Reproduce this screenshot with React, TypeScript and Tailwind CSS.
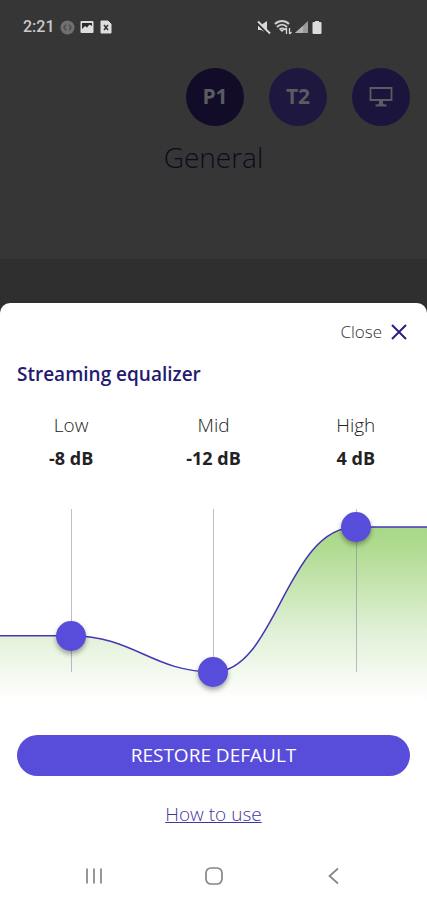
import { useState } from "react";

const MIN_DB = -12;
const MAX_DB = 6;
const CHART_HEIGHT = 224;
const THUMB_RADIUS = 15;
const TRACK_HEIGHT = 163;
const COLUMNS = [71, 213, 356];

const BANDS = ["Low", "Mid", "High"];

function levelToY(level: number) {
  return THUMB_RADIUS + ((MAX_DB - level) / (MAX_DB - MIN_DB)) * TRACK_HEIGHT;
}

function StatusBar() {
  return (
    <div className="flex h-6 items-center justify-between pl-[23px] pr-[104px] text-[#cacaca]">
      <div className="flex items-center gap-[5px]">
        <span className="font-['Roboto',sans-serif] text-base font-medium leading-6">2:21</span>
        <svg width="15" height="15" viewBox="0 0 15 15" aria-hidden="true">
          <circle cx="7.5" cy="7.5" r="7" fill="#707070" />
          <path d="M6 4.500 4 7.500l2 3M9 4.500l2 3-2 3" fill="none" stroke="#505050" strokeWidth="1.600" />
        </svg>
        <svg width="14" height="14" viewBox="0 0 14 14" aria-hidden="true">
          <rect x="0.5" y="1" width="13" height="12" rx="1" fill="#dedede" />
          <path d="M2 3h10v3L9.500 4.500 7 7.500 5 6 2 9z" fill="#2b2b2b" />
        </svg>
        <svg width="14" height="14" viewBox="0 0 14 14" aria-hidden="true">
          <path d="M2 1h7l3 3v9H2z" fill="#dedede" stroke="#dedede" strokeLinejoin="round" />
          <path d="m5 5 4 5M9 5l-4 5" stroke="#333" strokeWidth="1.500" />
        </svg>
      </div>
      <div className="flex items-center gap-[3px]">
        <svg width="15" height="15" viewBox="0 0 15 15" aria-hidden="true">
          <path d="M2 5h3l6-4v12L5 10H2z" fill="#d8d8d8" />
          <path d="m1 3 11 11" stroke="#2b2b2b" strokeWidth="2" />
          <path d="m2 1.500 12 12" stroke="#d8d8d8" strokeWidth="2" />
        </svg>
        <svg width="18" height="15" viewBox="0 0 18 15" aria-hidden="true">
          <path d="M1 4c4-4 10-4 14 0M3 7c3-3 7-3 10 0M5.500 9.500c2-1.500 3.500-1.500 5 0" fill="none" stroke="#d0d0d0" strokeWidth="2" />
          <path d="M6 10h4l-2 2z" fill="#d8d8d8" />
          <path d="M12.500 14V8m-2 2 2-2M15.500 8v6m2-2-2 2" fill="none" stroke="#d8d8d8" strokeWidth="1.300" />
        </svg>
        <svg width="13" height="14" viewBox="0 0 13 14" aria-hidden="true">
          <path d="M13 1v12H0z" fill="#9a9a9a" />
          <path d="M8 6v7H0z" fill="#b4b4b4" />
        </svg>
        <svg width="12" height="15" viewBox="0 0 12 15" aria-hidden="true">
          <path d="M4 1h4v1h1.500a1 1 0 0 1 1 1v10a1 1 0 0 1-1 1h-7a1 1 0 0 1-1-1V3a1 1 0 0 1 1-1H4z" fill="#dcdcdc" />
        </svg>
      </div>
    </div>
  );
}

function DeviceHeader() {
  return (
    <header className="bg-[#363636] pb-[84px] pt-[15px]">
      <StatusBar />
      <div className="mt-[29px] flex justify-end gap-[25px] pr-[17px] text-[21px] font-bold text-[#5b5b62]">
        <button type="button" className="size-[58px] rounded-full bg-[#120c29]">
          P1
        </button>
        <button type="button" className="size-[58px] rounded-full bg-[#1e1740]">
          T2
        </button>
        <button
          type="button"
          aria-label="Streaming device"
          className="flex size-[58px] items-center justify-center rounded-full bg-[#1b143c]"
        >
          <svg width="24" height="22" viewBox="0 0 24 22" fill="none" stroke="currentColor" strokeWidth="1.800" aria-hidden="true">
            <path d="M1.500 2h21v12h-21zM6.500 19.500h11" />
            <path d="M10 14v3.500L8 19h8l-2-1.500V14z" fill="currentColor" stroke="none" />
          </svg>
        </button>
      </div>
      <h1 className="mt-[13px] text-center text-[28px] font-light leading-9 text-[#0d0a1c]">General</h1>
    </header>
  );
}

function EqualizerChart({
  levels,
  onChange,
}: {
  levels: number[];
  onChange: (index: number, value: number) => void;
}) {
  const [low, mid, high] = levels.map(levelToY);
  const curve = `M0 ${low}H71C134 ${low} 152 ${mid} 214 ${mid}S286 ${high} 356 ${high}H427`;

  return (
    <div className="relative mt-6">
      <svg
        className="block h-[224px] w-full"
        viewBox={`0 0 427 ${CHART_HEIGHT}`}
        preserveAspectRatio="none"
        aria-hidden="true"
      >
        <defs>
          <linearGradient id="response" gradientUnits="userSpaceOnUse" x1="0" y1="32" x2="0" y2="206">
            <stop offset="0" stopColor="#a8d886" />
            <stop offset="0.150" stopColor="#b2dc94" />
            <stop offset="0.600" stopColor="#e0f0d6" />
            <stop offset="1" stopColor="#ffffff" />
          </linearGradient>
        </defs>
        <path d={`${curve}V${CHART_HEIGHT}H0Z`} fill="url(#response)" />
        {COLUMNS.map((x) => (
          <path
            key={x}
            d={`M${x + 0.5} ${THUMB_RADIUS}v${TRACK_HEIGHT}`}
            stroke="#83799a"
            strokeOpacity="0.500"
            vectorEffect="non-scaling-stroke"
          />
        ))}
        <path d={curve} fill="none" stroke="#4436b4" strokeWidth="1.500" vectorEffect="non-scaling-stroke" />
      </svg>
      <div className="absolute inset-x-0 top-0 grid grid-cols-3 justify-items-center">
        {BANDS.map((band, index) => (
          <input
            key={band}
            id={`band-${band}`}
            type="range"
            min={MIN_DB}
            max={MAX_DB}
            value={levels[index]}
            onChange={(event) => onChange(index, Number(event.target.value))}
            className="m-0 h-[193px] w-[30px] cursor-pointer appearance-none bg-transparent [direction:rtl] [writing-mode:vertical-lr] [&::-webkit-slider-thumb]:size-[30px] [&::-webkit-slider-thumb]:appearance-none [&::-webkit-slider-thumb]:rounded-full [&::-webkit-slider-thumb]:bg-[#584cda] [&::-webkit-slider-thumb]:shadow-[0_3px_5px_rgba(0,0,0,0.35)]"
          />
        ))}
      </div>
    </div>
  );
}

function NavigationBar() {
  return (
    <nav className="grid grid-cols-[1fr_48px_1fr] items-center px-[70px] pb-3 pt-[38px] text-[#858585]" aria-label="System">
      <button type="button" aria-label="Recent apps" className="flex h-6 w-12 items-center justify-center">
        <svg width="18" height="18" viewBox="0 0 18 18" stroke="currentColor" strokeWidth="1.700" aria-hidden="true">
          <path d="M2 1.500v15M9 1.500v15M16 1.500v15" />
        </svg>
      </button>
      <button type="button" aria-label="Home" className="flex h-6 w-12 items-center justify-center">
        <svg width="18" height="18" viewBox="0 0 18 18" fill="none" stroke="currentColor" strokeWidth="1.700" aria-hidden="true">
          <rect x="1" y="1" width="16" height="16" rx="5" />
        </svg>
      </button>
      <button type="button" aria-label="Back" className="flex h-6 w-12 items-center justify-center justify-self-end">
        <svg width="18" height="18" viewBox="0 0 18 18" fill="none" stroke="currentColor" strokeWidth="1.700" aria-hidden="true">
          <path d="m14 1.500-8.500 7.500 8.500 7.500" />
        </svg>
      </button>
    </nav>
  );
}

export default function App() {
  const [levels, setLevels] = useState([-8, -12, 4]);

  const updateLevel = (index: number, value: number) =>
    setLevels((current) => current.map((level, i) => (i === index ? value : level)));

  return (
    <div className="flex min-h-screen flex-col bg-[#2f2f2f] font-['Open_Sans','Noto_Sans',sans-serif]">
      <DeviceHeader />
      <section className="mt-11 flex grow flex-col rounded-t-[10px] bg-white pt-[17px]" aria-labelledby="sheet-title">
        <button type="button" className="mr-[17px] flex items-center gap-[6px] self-end text-[17px] font-light leading-6 text-[#333]">
          Close
          <svg width="22" height="22" viewBox="0 0 22 22" stroke="#2a1f80" strokeWidth="2" aria-hidden="true">
            <path d="m4 4 14 14M18 4 4 18" />
          </svg>
        </button>
        <h2 id="sheet-title" className="mt-[18px] px-[17px] text-[19px] font-semibold leading-6 text-[#241a70]">
          Streaming equalizer
        </h2>
        <div className="mt-[27px] grid grid-cols-3 text-center text-lg text-[#222]">
          {BANDS.map((band, index) => (
            <label key={band} htmlFor={`band-${band}`} className="flex flex-col gap-[9px] leading-6">
              <span className="text-[19px] font-light">{band}</span>
              <span className="font-bold">{levels[index]} dB</span>
            </label>
          ))}
        </div>
        <EqualizerChart levels={levels} onChange={updateLevel} />
        <button
          type="button"
          onClick={() => setLevels([0, 0, 0])}
          className="mx-[17px] mt-[17px] h-[41px] rounded-full bg-[#584cda] text-[19px] text-white"
        >
          RESTORE DEFAULT
        </button>
        <a href="#how-to-use" className="mt-[26px] self-center text-[19px] font-light leading-6 text-[#43369f] underline">
          How to use
        </a>
        <NavigationBar />
      </section>
    </div>
  );
}
